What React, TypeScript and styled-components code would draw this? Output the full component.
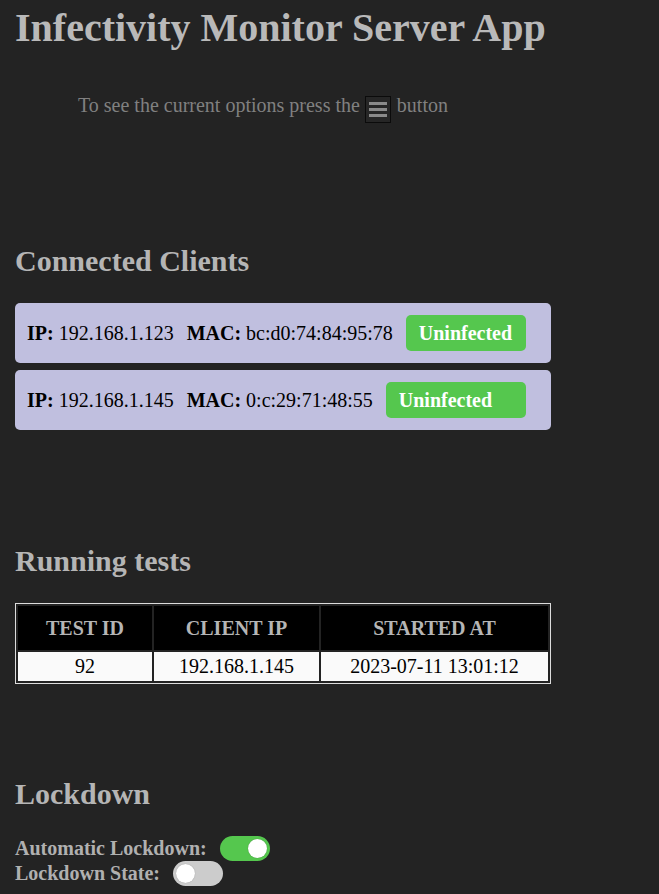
import React from "react";
import styled, { createGlobalStyle } from "styled-components";

const GlobalStyle = createGlobalStyle`
  html, body {
    margin: 0;
    padding: 0;
    background: #232323;
  }
  body {
    font-family: "Liberation Serif", "Times New Roman", serif;
    font-size: 20px;
  }
`;

const Page = styled.main`
  width: 536px;
  padding: 5px 15px 8px;
`;

const Title = styled.h1`
  margin: 0;
  font-size: 40px;
  line-height: 46px;
  font-weight: bold;
  color: #b9b9b9;
  white-space: nowrap;
`;

const Hint = styled.p`
  margin: 43px 0 0 63px;
  font-size: 20px;
  line-height: 23px;
  color: #808080;
  white-space: nowrap;
`;

const MenuKey = styled.span`
  display: inline-flex;
  align-items: center;
  justify-content: center;
  box-sizing: border-box;
  width: 26px;
  height: 27px;
  margin: 0 1px 0 0;
  border: 1px solid #0b0b0b;
  background: #262626;
  vertical-align: -6px;
`;

const SectionTitle = styled.h2<{ $gap: number }>`
  margin: ${(p) => p.$gap}px 0 25px;
  font-size: 30px;
  line-height: 34px;
  font-weight: bold;
  color: #b5b5b5;
`;

const ClientList = styled.div`
  display: flex;
  flex-direction: column;
  gap: 7px;
`;

const ClientCard = styled.div`
  display: flex;
  align-items: center;
  gap: 13px;
  box-sizing: border-box;
  width: 536px;
  height: 60px;
  padding: 12px 25px 12px 12px;
  border-radius: 5px;
  background: #c0bfdf;
  color: #000;
  font-size: 20px;
  white-space: nowrap;
`;

const Field = styled.span`
  display: inline-block;
`;

const FieldLabel = styled.b`
  font-weight: bold;
`;

const StatusButton = styled.button`
  flex: 1 0 auto;
  height: 36px;
  padding: 0 13px;
  border: none;
  border-radius: 5px;
  background: #55c74e;
  color: #fff;
  font-family: "Liberation Serif", "Times New Roman", serif;
  font-size: 20px;
  font-weight: bold;
  text-align: left;
  cursor: pointer;
`;

const TestsTable = styled.table`
  width: 536px;
  table-layout: fixed;
  border: 1px solid #dcdcdc;
  border-spacing: 2px;
  font-size: 20px;
`;

const HeadCell = styled.th<{ $w?: number }>`
  ${(p) => (p.$w ? `width: ${p.$w}px;` : "")}
  padding: 11px 0 10px;
  background: #000;
  color: #b5b5b5;
  font-weight: bold;
  line-height: 23px;
  text-align: center;
`;

const BodyCell = styled.td`
  padding: 3px 0 3px;
  background: #fafafa;
  color: #000;
  line-height: 23px;
  text-align: center;
`;

const SwitchRow = styled.div`
  display: flex;
  align-items: center;
  gap: 13px;
  height: 25px;
`;

const SwitchLabel = styled.span`
  font-size: 20px;
  font-weight: bold;
  color: #b0b0b0;
`;

const Switch = styled.span<{ $on: boolean }>`
  position: relative;
  display: inline-block;
  width: 50px;
  height: 25px;
  border-radius: 13px;
  background: ${(p) => (p.$on ? "#55c74e" : "#cccccc")};

  &::after {
    content: "";
    position: absolute;
    top: 3px;
    left: ${(p) => (p.$on ? "28px" : "3px")};
    width: 19px;
    height: 19px;
    border-radius: 50%;
    background: #fff;
    box-shadow: 0 0 1px rgba(0, 0, 0, 0.35);
  }
`;

const MenuIcon = () => (
  <svg width="18" height="17" viewBox="0 0 18 17" aria-hidden="true">
    <rect x="0" y="1" width="18" height="3" fill="#8a8a8a" />
    <rect x="0" y="7" width="18" height="3" fill="#8a8a8a" />
    <rect x="0" y="13" width="18" height="3" fill="#8a8a8a" />
  </svg>
);

const clients = [
  { ip: "192.168.1.123", mac: "bc:d0:74:84:95:78", status: "Uninfected" },
  { ip: "192.168.1.145", mac: "0:c:29:71:48:55", status: "Uninfected" },
];

const tests = [{ id: "92", ip: "192.168.1.145", started: "2023-07-11 13:01:12" }];

export default function App() {
  return (
    <>
      <GlobalStyle />
      <Page>
        <Title>Infectivity Monitor Server App</Title>
        <Hint>
          To see the current options press the{" "}
          <MenuKey>
            <MenuIcon />
          </MenuKey>{" "}
          button
        </Hint>

        <SectionTitle $gap={121}>Connected Clients</SectionTitle>
        <ClientList>
          {clients.map((c) => (
            <ClientCard key={c.ip}>
              <Field>
                <FieldLabel>IP:</FieldLabel> {c.ip}
              </Field>
              <Field>
                <FieldLabel>MAC:</FieldLabel> {c.mac}
              </Field>
              <StatusButton>{c.status}</StatusButton>
            </ClientCard>
          ))}
        </ClientList>

        <SectionTitle $gap={114}>Running tests</SectionTitle>
        <TestsTable>
          <thead>
            <tr>
              <HeadCell $w={134}>TEST ID</HeadCell>
              <HeadCell $w={165}>CLIENT IP</HeadCell>
              <HeadCell>STARTED AT</HeadCell>
            </tr>
          </thead>
          <tbody>
            {tests.map((t) => (
              <tr key={t.id}>
                <BodyCell>{t.id}</BodyCell>
                <BodyCell>{t.ip}</BodyCell>
                <BodyCell>{t.started}</BodyCell>
              </tr>
            ))}
          </tbody>
        </TestsTable>

        <SectionTitle $gap={93}>Lockdown</SectionTitle>
        <SwitchRow>
          <SwitchLabel>Automatic Lockdown:</SwitchLabel>
          <Switch $on={true} role="switch" aria-checked="true" />
        </SwitchRow>
        <SwitchRow>
          <SwitchLabel>Lockdown State:</SwitchLabel>
          <Switch $on={false} role="switch" aria-checked="false" />
        </SwitchRow>
      </Page>
    </>
  );
}
